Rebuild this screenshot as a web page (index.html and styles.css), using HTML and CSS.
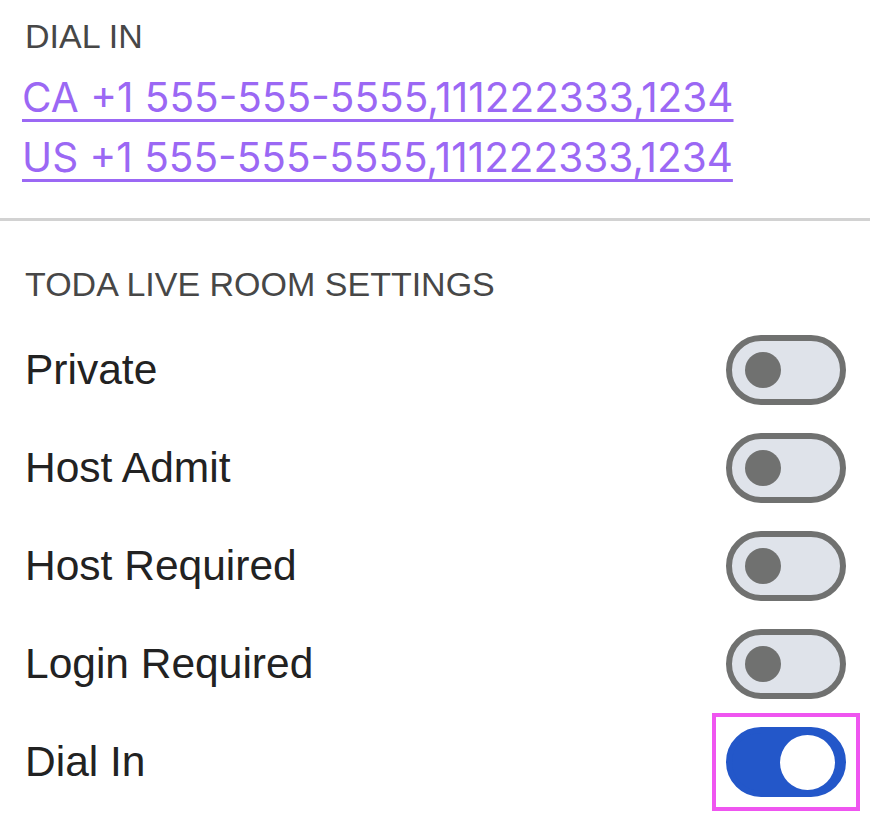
FILE: index.html
```html
<!DOCTYPE html>
<html lang="en">

<head>
  <meta charset="UTF-8">
  <title>Room settings</title>
  <link rel="stylesheet" href="styles.css">
</head>

<body>
  <!-- dial in numbers -->
  <div class="dial">
    <div class="section-title">DIAL IN</div>
    <a class="dial-link" href="#">CA +1 555-555-5555,111222333,1234</a>
    <a class="dial-link" href="#">US +1 555-555-5555,111222333,1234</a>
  </div>

  <!-- room settings -->
  <div class="settings">
    <div class="section-title">TODA LIVE ROOM SETTINGS</div>
    <div class="row">
      <span class="row-label">Private</span>
      <span class="toggle"><span class="knob"></span></span>
    </div>
    <div class="row">
      <span class="row-label">Host Admit</span>
      <span class="toggle"><span class="knob"></span></span>
    </div>
    <div class="row">
      <span class="row-label">Host Required</span>
      <span class="toggle"><span class="knob"></span></span>
    </div>
    <div class="row">
      <span class="row-label">Login Required</span>
      <span class="toggle"><span class="knob"></span></span>
    </div>
    <div class="row">
      <span class="row-label">Dial In</span>
      <!-- focus box around the active switch -->
      <span class="focus-ring">
        <span class="toggle toggle-on"><span class="knob"></span></span>
      </span>
    </div>
  </div>
</body>

</html>
```

FILE: styles.css
```css
* {
  margin: 0;
  padding: 0;
  box-sizing: border-box;
}
body {
  background: #fff;
  font-family: "Liberation Sans", Arial, sans-serif;
}

.section-title {
  font-family: "Liberation Sans", Arial, sans-serif;
  font-size: 34px;
  line-height: 40px;
  color: #474747;
}

/* 上面的拨入号码 */
.dial {
  display: flex;
  flex-direction: column;
  align-items: flex-start;
  padding: 16px 25px 30px 22px;
  border-bottom: 3px solid #d2d2d2;
}
.dial .section-title {
  margin-left: 3px;
  margin-bottom: 12px;
}
.dial-link {
  font-family: Inter, Roboto, sans-serif;
  font-size: 40.5px;
  line-height: 60px;
  color: #9b68f4;
  text-decoration: underline;
  text-decoration-thickness: 3px;
  text-underline-offset: 7px;
}

/* 设置列表 */
.settings {
  padding: 43px 24px 0 25px;
}
.settings .section-title {
  margin-bottom: 17px;
}
.row {
  display: flex;
  align-items: center;
  justify-content: space-between;
  height: 98px;
}
.row-label {
  font-size: 42.5px;
  color: #222;
}

.toggle {
  display: flex;
  align-items: center;
  width: 120px;
  height: 70px;
  padding-left: 13px;
  border: 6px solid #707170;
  border-radius: 35px;
  background: #dfe3ea;
}
.knob {
  width: 36px;
  height: 36px;
  border-radius: 50%;
  background: #707170;
}
.toggle-on {
  justify-content: flex-end;
  padding: 0 5px 0 0;
  border-color: #2357c9;
  background: #2357c9;
}
.toggle-on .knob {
  width: 55px;
  height: 55px;
  background: #fff;
}
.focus-ring {
  display: flex;
  padding: 10px;
  margin-right: -14px;
  border: 4px solid #ef55f0;
}
```
